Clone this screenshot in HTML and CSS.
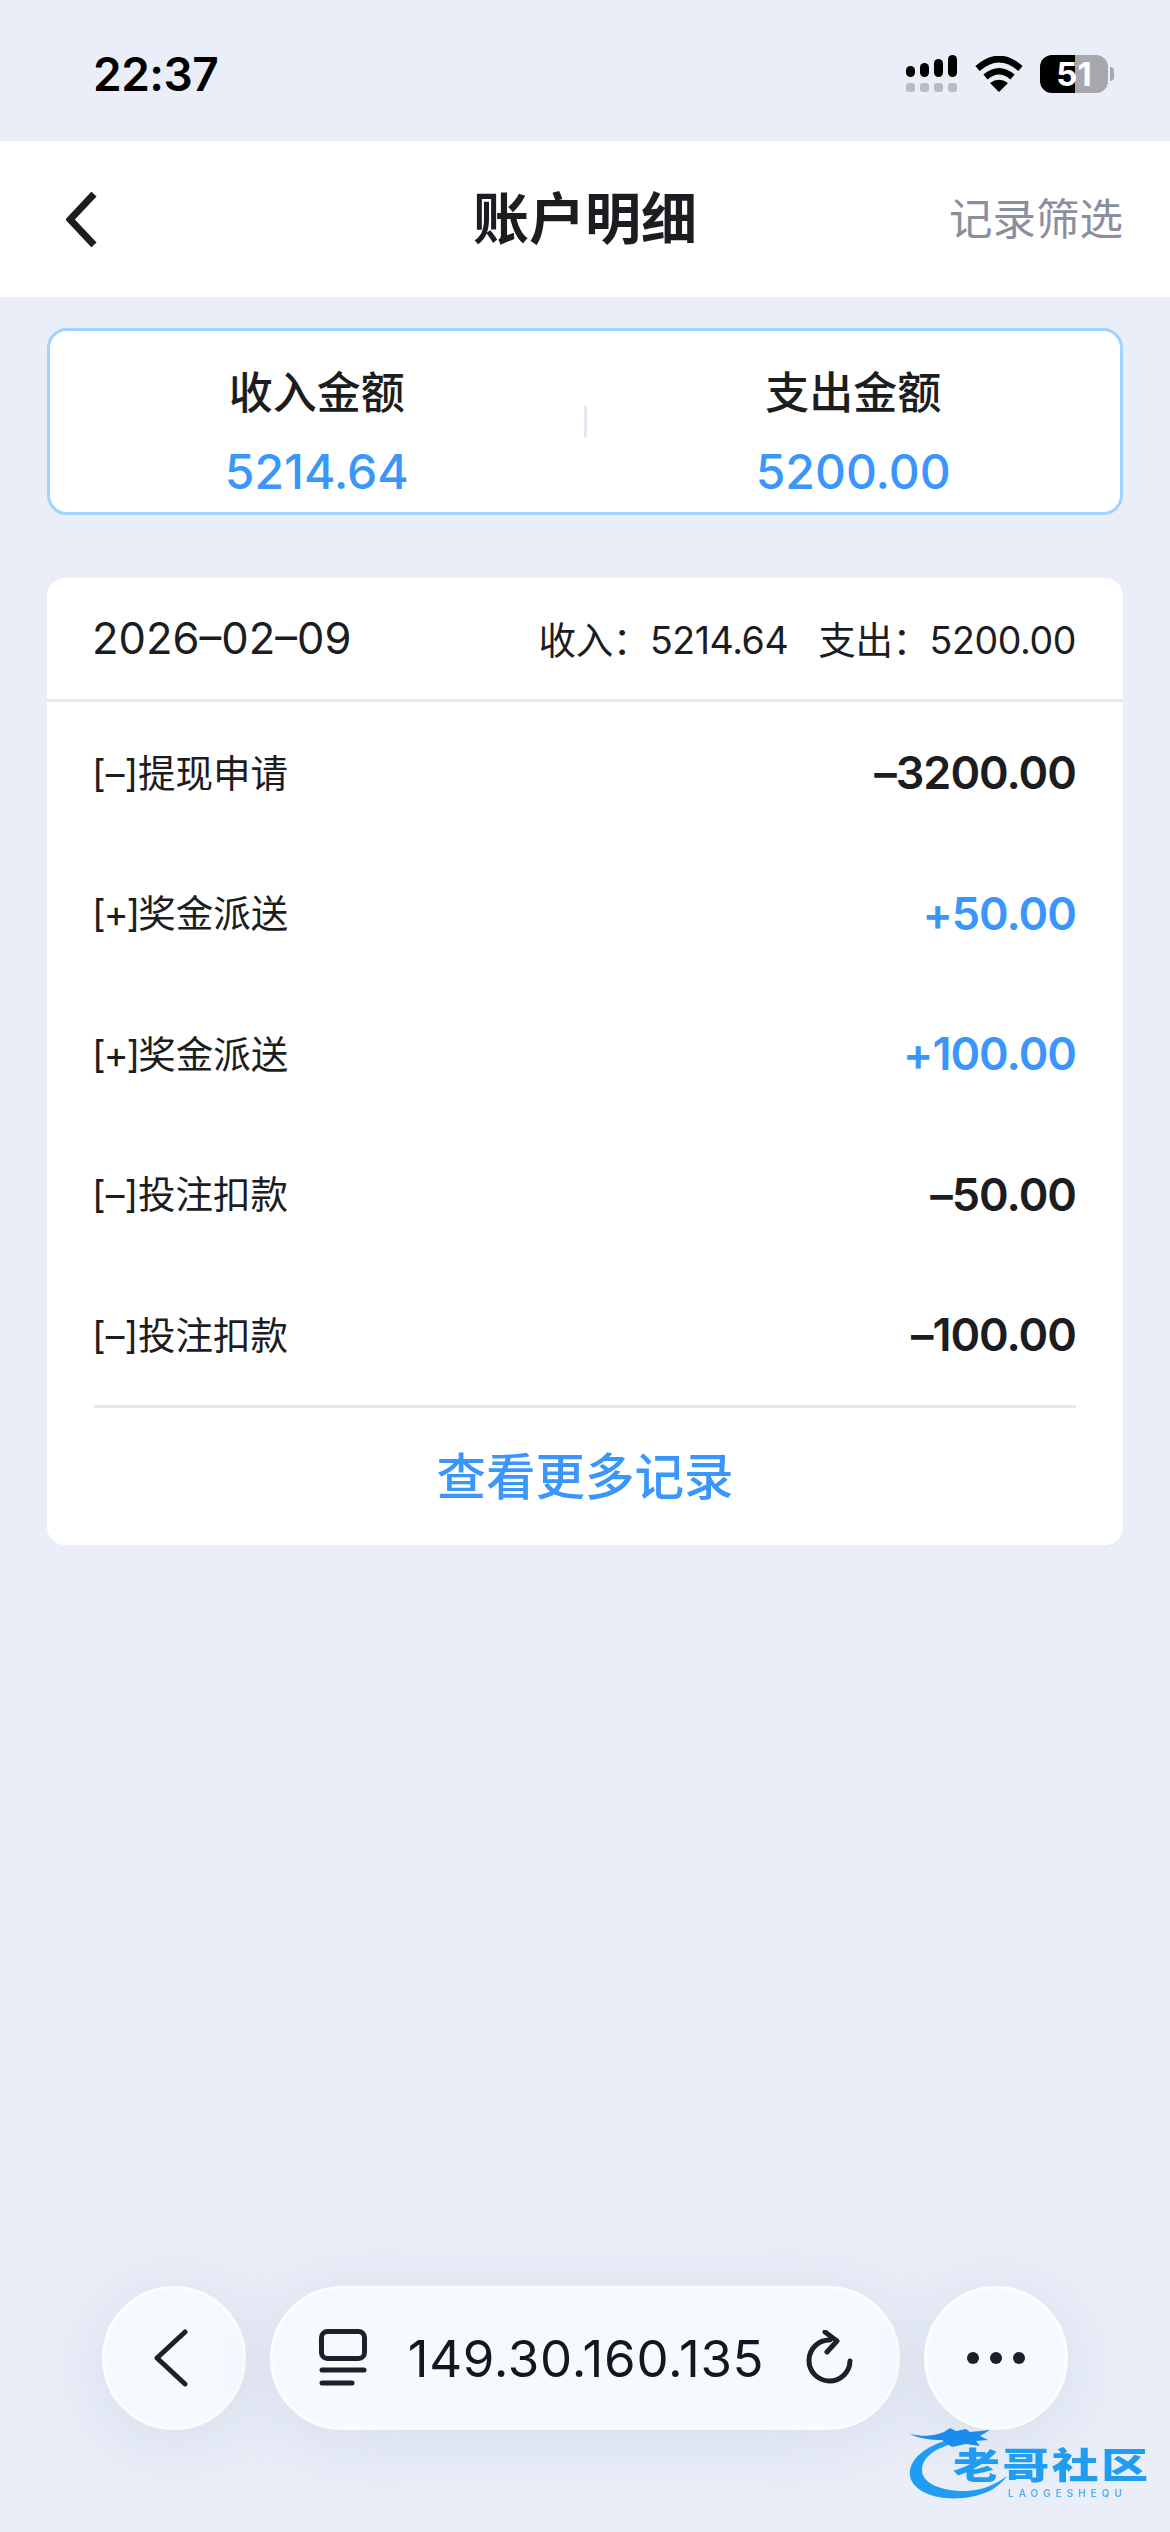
FILE: index.html
```html
<!DOCTYPE html>
<html lang="zh-CN">
<head>
  <meta charset="UTF-8" />
  <meta name="viewport" content="width=device-width, initial-scale=1.0"/>
  <title>账户明细</title>
  <link rel="stylesheet" href="styles.css">
</head>
<body>

<div id="page">

  <div class="status-bar">
    <span class="status-time">22:37</span>
    <div class="status-icons">
      <svg class="icon-signal" width="52" height="38" viewBox="0 0 52 38">
        <rect x="0" y="11" width="9" height="11" rx="4.5" fill="#000"/>
        <rect x="14" y="8" width="9" height="14" rx="4.5" fill="#000"/>
        <rect x="28" y="4" width="9" height="18" rx="4.5" fill="#000"/>
        <rect x="42" y="0" width="9" height="22" rx="4.5" fill="#000"/>
        <rect x="0" y="28" width="9" height="9" rx="3" fill="#b9bcc4"/>
        <rect x="14" y="28" width="9" height="9" rx="3" fill="#b9bcc4"/>
        <rect x="28" y="28" width="9" height="9" rx="3" fill="#b9bcc4"/>
        <rect x="42" y="28" width="9" height="9" rx="3" fill="#b9bcc4"/>
      </svg>
      <svg class="icon-wifi" width="48" height="37" viewBox="0 0 48 37">
        <path d="M2.5 12.5 Q24 -6.5 45.5 12.5" fill="none" stroke="#000" stroke-width="6.5"/>
        <path d="M10.5 21 Q24 9.5 37.5 21" fill="none" stroke="#000" stroke-width="6.5"/>
        <path d="M15 27 Q24 20.5 33 27 L24 36 Z" fill="#000"/>
      </svg>
      <div class="battery">51</div>
    </div>
  </div>

  <div class="nav-bar">
    <svg class="nav-back" width="31" height="55" viewBox="0 0 31 55">
      <path d="M28 2 L4 27.5 L28 53" fill="none" stroke="#1c1d21" stroke-width="7"/>
    </svg>
    <div class="nav-title">账户明细</div>
    <div class="nav-filter">记录筛选</div>
  </div>

  <div class="summary">
    <div class="summary-item">
      <div class="summary-label">收入金额</div>
      <div class="summary-value">5214.64</div>
    </div>
    <div class="summary-line"></div>
    <div class="summary-item">
      <div class="summary-label">支出金额</div>
      <div class="summary-value">5200.00</div>
    </div>
  </div>

  <div class="records">
    <div class="records-head">
      <span class="records-date">2026–02–09</span>
      <div class="records-total">
        <span>收入：5214.64</span>
        <span>支出：5200.00</span>
      </div>
    </div>

    <div class="record">
      <span class="record-name">[–]提现申请</span>
      <span class="record-amount">–3200.00</span>
    </div>
    <div class="record">
      <span class="record-name"><span class="sign-plus">[+]</span>奖金派送</span>
      <span class="record-amount plus">+50.00</span>
    </div>
    <div class="record">
      <span class="record-name"><span class="sign-plus">[+]</span>奖金派送</span>
      <span class="record-amount plus">+100.00</span>
    </div>
    <div class="record">
      <span class="record-name">[–]投注扣款</span>
      <span class="record-amount">–50.00</span>
    </div>
    <div class="record">
      <span class="record-name">[–]投注扣款</span>
      <span class="record-amount">–100.00</span>
    </div>

    <div class="records-more">
      <span>查看更多记录</span>
    </div>
  </div>

  <div class="toolbar">
    <div class="tool-circle">
      <svg class="tool-back" width="34" height="58" viewBox="0 0 34 58">
        <path d="M31 3 L3 29 L31 55" fill="none" stroke="#1c2029" stroke-width="5" stroke-linecap="round" stroke-linejoin="round"/>
      </svg>
    </div>
    <div class="tool-url">
      <svg width="48" height="58" viewBox="0 0 48 58">
        <rect x="2.5" y="2.5" width="43" height="27" rx="6" fill="none" stroke="#1c2029" stroke-width="5"/>
        <path d="M3 41 H45" stroke="#1c2029" stroke-width="5" stroke-linecap="round"/>
        <path d="M3 54 H33" stroke="#1c2029" stroke-width="5" stroke-linecap="round"/>
      </svg>
      <span class="url-text">149.30.160.135</span>
      <svg width="48" height="56" viewBox="0 0 48 56">
        <path d="M25 10 A20.5 20.5 0 1 0 45 31" fill="none" stroke="#1c2029" stroke-width="5" stroke-linecap="round"/>
        <path d="M20 2 L32 11 L22 22" fill="none" stroke="#1c2029" stroke-width="5" stroke-linecap="round" stroke-linejoin="round"/>
      </svg>
    </div>
    <div class="tool-circle">
      <svg width="60" height="14" viewBox="0 0 60 14">
        <circle cx="7" cy="7" r="6" fill="#1c2029"/>
        <circle cx="30" cy="7" r="6" fill="#1c2029"/>
        <circle cx="53" cy="7" r="6" fill="#1c2029"/>
      </svg>
    </div>
  </div>

  <div class="watermark">
    <svg class="watermark-dragon" width="104" height="76" viewBox="0 0 104 76">
      <path d="M44 13 C14 20 0 36 2 50 C5 68 36 76 62 71 C80 68 92 60 99 50 C86 60 70 66 52 65 C30 64 14 56 14 44 C14 32 26 22 48 17 Z" fill="#1f9df2"/>
      <path d="M2 8 C16 11 26 10 36 6 L42 2 L48 5 L58 3 L62 6 L82 4 L72 10 L80 14 L68 15 L72 20 L58 18 L44 21 L34 14 C22 14 10 12 2 8 Z" fill="#1a8cf0"/>
    </svg>
    <div class="watermark-name">老哥社区</div>
    <div class="watermark-sub">LAOGESHEQU</div>
  </div>

</div>

</body>
</html>
```

FILE: styles.css
```css
* {
  box-sizing: border-box;
}

body {
  margin: 0;
  font-family: Inter, 'Noto Sans CJK SC', sans-serif;
  background: #e9eef8;
  color: #1c1d21;
}

#page {
  position: relative;
  display: flex;
  flex-direction: column;
  width: 1170px;
  height: 2532px;
  overflow: hidden;
}

/* status bar */
.status-bar {
  display: flex;
  justify-content: space-between;
  align-items: center;
  height: 141px;
  padding: 0 62px 0 93px;
  flex-shrink: 0;
}

.status-time {
  font-size: 46px;
  font-weight: 600;
  letter-spacing: -0.5px;
  color: #000;
  margin-top: 7px;
}

.status-icons {
  display: flex;
  align-items: center;
  gap: 17px;
  margin-top: 7px;
}

.battery {
  position: relative;
  width: 68px;
  height: 38px;
  border-radius: 12px;
  background: linear-gradient(to right, #000 51%, #a6a8ad 51%);
  color: #fff;
  font-size: 33px;
  font-weight: 700;
  line-height: 38px;
  text-align: center;
}

.battery::after {
  content: '';
  position: absolute;
  left: 70px;
  top: 12px;
  width: 4px;
  height: 14px;
  border-radius: 0 7px 7px 0;
  background: #a6a8ad;
}

/* nav */
.nav-bar {
  display: grid;
  grid-template-columns: 1fr auto 1fr;
  align-items: center;
  height: 156px;
  padding: 0 47px;
  background: #fff;
  flex-shrink: 0;
}

.nav-back {
  margin-left: 19px;
}

.nav-title {
  font-size: 56px;
  font-weight: 700;
  color: #1c1d21;
  margin-bottom: 9px;
}

.nav-filter {
  justify-self: end;
  font-size: 43.5px;
  color: #8a8f9e;
  margin-bottom: 5px;
}

/* summary */
.summary {
  display: flex;
  align-items: center;
  height: 187px;
  margin: 31px 47px 0;
  padding-top: 20px;
  border: 3px solid #a0d3ff;
  border-radius: 20px;
  background: #fff;
  flex-shrink: 0;
}

.summary-item {
  flex: 1;
  text-align: center;
}

.summary-label {
  font-size: 44px;
  font-weight: 500;
  line-height: 60px;
  margin-bottom: 20px;
}

.summary-value {
  font-size: 48px;
  font-weight: 500;
  line-height: 58px;
  color: #3a96fb;
}

.summary-line {
  width: 3px;
  height: 31px;
  margin-top: -20px;
  background: #e6e9f5;
}

/* records */
.records {
  margin: 63px 47px 0;
  border-radius: 18px;
  background: #fff;
  flex-shrink: 0;
}

.records-head {
  display: flex;
  justify-content: space-between;
  align-items: center;
  height: 124px;
  padding: 0 47px 2px;
  border-bottom: 3px solid #e8e8e8;
}

.records-date {
  font-size: 43.5px;
  margin-left: -2px;
}

.records-total {
  display: flex;
  gap: 30px;
  font-size: 37.5px;
  letter-spacing: -0.4px;
}

.record {
  display: flex;
  justify-content: space-between;
  align-items: center;
  height: 140.5px;
  padding: 0 47px;
}

.record-name {
  font-size: 37.5px;
  margin-bottom: 4px;
  margin-left: -2px;
}

.sign-plus {
  letter-spacing: -2px;
}

.record-amount {
  font-size: 45px;
  font-weight: 600;
  letter-spacing: -1px;
  margin-top: 1px;
}

.plus {
  color: #3a96fb;
}

.records-more {
  display: flex;
  justify-content: center;
  align-items: center;
  height: 140px;
  margin: 0 47px;
  padding-bottom: 6px;
  border-top: 3px solid #e8e8e8;
  font-size: 49.5px;
  font-weight: 500;
  color: #3a96fb;
}

/* browser toolbar */
.toolbar {
  display: flex;
  justify-content: center;
  gap: 24px;
  margin-top: auto;
  margin-bottom: 102px;
}

.tool-circle,
.tool-url {
  display: flex;
  align-items: center;
  height: 144px;
  border: 3px solid #fbfdff;
  background: #f5faff;
  box-shadow: 0 10px 70px rgba(160, 170, 195, 0.24);
}

.tool-circle {
  justify-content: center;
  width: 144px;
  border-radius: 50%;
}

.tool-back {
  margin-right: 6px;
}

.tool-url {
  justify-content: space-between;
  width: 630px;
  padding: 0 44px 0 46px;
  border-radius: 72px;
}

.url-text {
  font-size: 51px;
  letter-spacing: 0.7px;
  color: #14171f;
}

/* watermark */
.watermark {
  position: absolute;
  left: 908px;
  top: 2426px;
  width: 250px;
  height: 80px;
  filter: blur(0.4px);
}

.watermark-dragon {
  position: absolute;
  left: 0;
  top: 0;
}

.watermark-name {
  position: absolute;
  left: 45px;
  top: 22px;
  font-size: 36px;
  font-weight: 900;
  line-height: 36px;
  letter-spacing: 2px;
  white-space: nowrap;
  color: #1f9df2;
  transform: scaleX(1.3);
  transform-origin: left center;
}

.watermark-sub {
  position: absolute;
  left: 100px;
  top: 62px;
  font-size: 10px;
  font-weight: 600;
  line-height: 10px;
  letter-spacing: 5px;
  color: #5aaef0;
}
```
